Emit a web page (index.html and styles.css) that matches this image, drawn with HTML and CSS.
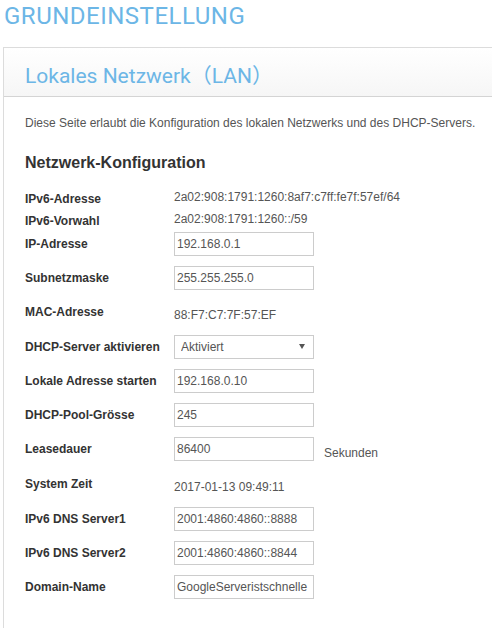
FILE: index.html
```html
<!DOCTYPE html>
<html lang="de">
<head>
<meta charset="utf-8">
<title>Grundeinstellung</title>
<link rel="stylesheet" href="styles.css">
</head>
<body>
<h1 class="page-title">GRUNDEINSTELLUNG</h1>
<section class="panel">
  <header class="panel-head">
    <h2 class="panel-title">Lokales Netzwerk（LAN）</h2>
  </header>
  <div class="panel-body">
    <p class="desc">Diese Seite erlaubt die Konfiguration des lokalen Netzwerks und des DHCP-Servers.</p>
    <h3 class="section-title">Netzwerk-Konfiguration</h3>
    <div class="form">
      <div class="row compact"><span class="label">IPv6-Adresse</span><span class="value up">2a02:908:1791:1260:8af7:c7ff:fe7f:57ef/64</span></div>
      <div class="row compact"><span class="label">IPv6-Vorwahl</span><span class="value up">2a02:908:1791:1260::/59</span></div>
      <div class="row"><span class="label">IP-Adresse</span><input class="field" type="text" value="192.168.0.1"></div>
      <div class="row"><span class="label">Subnetzmaske</span><input class="field" type="text" value="255.255.255.0"></div>
      <div class="row text"><span class="label">MAC-Adresse</span><span class="value down">88:F7:C7:7F:57:EF</span></div>
      <div class="row"><span class="label">DHCP-Server aktivieren</span>
        <span class="select-wrap">
          <select class="field select"><option>Aktiviert</option><option>Deaktiviert</option></select>
          <svg class="arrow" width="6" height="5" viewBox="0 0 6 5"><path d="M0 0H6L3 5Z" fill="#555"/></svg>
        </span>
      </div>
      <div class="row"><span class="label">Lokale Adresse starten</span><input class="field" type="text" value="192.168.0.10"></div>
      <div class="row"><span class="label">DHCP-Pool-Grösse</span><input class="field" type="text" value="245"></div>
      <div class="row"><span class="label">Leasedauer</span><input class="field" type="text" value="86400"><span class="unit">Sekunden</span></div>
      <div class="row text tall"><span class="label">System Zeit</span><span class="value down">2017-01-13 09:49:11</span></div>
      <div class="row"><span class="label">IPv6 DNS Server1</span><input class="field" type="text" value="2001:4860:4860::8888"></div>
      <div class="row"><span class="label">IPv6 DNS Server2</span><input class="field" type="text" value="2001:4860:4860::8844"></div>
      <div class="row"><span class="label">Domain-Name</span><input class="field" type="text" value="GoogleServeristschnelle"></div>
    </div>
  </div>
</section>
</body>
</html>
```
FILE: styles.css
```css
html, body {
  margin: 0;
  padding: 0;
  background: #fff;
}
body {
  font-family: "Liberation Sans", Arial, sans-serif;
  font-size: 12px;
  color: #555;
  overflow: hidden;
}
.page-title {
  margin: 0;
  padding: 2px 0 0 4px;
  font-family: Roboto, "Liberation Sans", sans-serif;
  font-weight: 400;
  font-size: 24px;
  line-height: 28px;
  color: #6cb6e6;
  letter-spacing: 0.5px;
}
.panel {
  margin: 17px 0 0 3px;
  border-left: 1px solid #dcdcdc;
  border-top: 1px solid #dcdcdc;
  height: 600px;
}
.panel-head {
  height: 48px;
  border-bottom: 1px solid #d4d4d4;
  background: linear-gradient(to bottom, #ffffff, #f6f6f6);
  padding-left: 21px;
  display: flex;
  align-items: center;
}
.panel-title {
  margin: 0;
  font-family: Roboto, "Liberation Sans", "Noto Sans CJK JP", sans-serif;
  font-weight: 400;
  font-size: 21px;
  color: #6cb6e6;
  padding-top: 4px;
}
.panel-body {
  padding-left: 21px;
}
.desc {
  margin: 19px 0 0 0;
  font-size: 12px;
  line-height: 14px;
  color: #555;
}
.section-title {
  margin: 24px 0 0 0;
  font-size: 16px;
  font-weight: bold;
  line-height: 18px;
  color: #333;
}
.form {
  margin-top: 16px;
}
.row {
  display: flex;
  align-items: center;
  height: 24px;
  margin-bottom: 10px;
}
.row.compact {
  height: 22px;
  margin-bottom: 0;
}
.row.text {
  margin-bottom: 11px;
}
.row.tall {
  height: 25px;
}
.label {
  width: 149px;
  flex: none;
  font-weight: bold;
  color: #333;
  font-size: 12px;
}
.value {
  color: #555;
  font-size: 12px;
}
.value.up {
  padding-bottom: 4px;
}
.value.down {
  padding-top: 6px;
}
.field {
  box-sizing: border-box;
  width: 140px;
  height: 24px;
  margin: 0;
  border: 1px solid #cccccc;
  border-radius: 0;
  padding: 0 2px;
  font-family: "Liberation Sans", Arial, sans-serif;
  font-size: 12px;
  color: #555;
  background: #fff;
  outline: none;
}
.select-wrap {
  position: relative;
  display: block;
  width: 140px;
  height: 24px;
}
.select {
  -webkit-appearance: none;
  appearance: none;
  padding-left: 6px;
  display: block;
}
.arrow {
  position: absolute;
  right: 9px;
  top: 9px;
}
.unit {
  margin-left: 10px;
  padding-top: 8px;
  color: #555;
  font-size: 12px;
}
```
